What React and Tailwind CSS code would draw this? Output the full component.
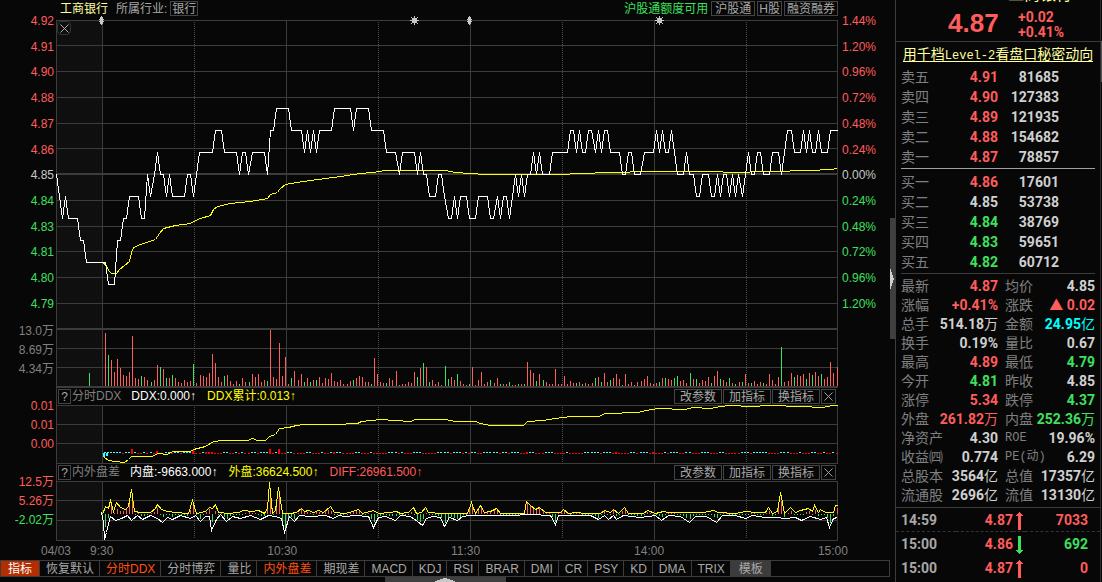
import clsx from 'clsx';
import { X } from 'lucide-react';

const LEFT = 56;
const OPEN_X = 102;
const MINUTE = 3.0625;

const priceLabels = ['4.92', '4.91', '4.90', '4.88', '4.87', '4.86', '4.85', '4.84', '4.83', '4.81', '4.80', '4.79'];
const percentLabels = ['1.44%', '1.20%', '0.96%', '0.72%', '0.48%', '0.24%', '0.00%', '0.24%', '0.48%', '0.72%', '0.96%', '1.20%'];

const pricePoints =
  '56,174 59,196 62,218 65,196 68,218 77,218 80,240 83,240 86,262 105,262 108,284 114,284 117,240 120,240 ' +
  '123,218 126,218 129,196 138,196 141,218 144,218 147,174 150,196 154,174 157,152 160,174 163,174 166,196 169,174 172,196 ' +
  '184,196 187,174 190,174 193,196 196,174 199,152 212,152 215,130 221,130 224,152 236,152 239,174 242,152 245,152 ' +
  '248,174 252,152 264,152 267,174 270,130 273,130 276,108 288,108 291,130 301,130 304,152 307,130 310,152 313,130 ' +
  '316,152 319,130 331,130 334,108 350,108 353,130 356,108 368,108 371,130 383,130 386,152 395,152 399,174 402,152 ' +
  '414,152 417,174 420,152 423,174 426,174 429,196 435,196 438,174 441,174 444,196 448,218 451,218 454,196 457,218 ' +
  '460,196 466,196 469,218 475,218 478,196 487,196 490,218 493,218 497,196 500,218 503,196 506,196 509,218 512,196 ' +
  '515,174 518,196 521,174 524,196 527,174 530,174 533,152 536,174 539,152 542,174 549,174 552,152 567,152 570,130 ' +
  '573,130 576,152 579,130 582,152 585,152 588,130 591,130 595,152 598,130 601,152 604,130 607,130 610,152 619,152 ' +
  '622,174 625,174 628,152 631,152 634,174 640,174 644,152 653,152 656,130 659,152 662,130 665,152 668,152 671,130 ' +
  '674,152 677,174 683,174 686,152 689,174 693,174 696,196 699,196 702,174 708,174 711,196 714,196 717,174 720,196 ' +
  '723,174 726,174 729,196 732,174 735,196 738,174 742,196 745,174 748,152 751,174 754,174 757,152 760,152 763,174 ' +
  '769,174 772,152 778,152 781,174 784,152 787,130 791,130 794,152 800,152 803,130 806,152 809,130 812,152 815,152 ' +
  '818,130 821,152 827,152 830,130 837,130';

const averagePoints =
  '102,262 106,265 108,270 111,273 116,273 119,269 124,265 129,261 131,252 133,247 140,244 155,239 159,233 163,228 ' +
  '175,225 190,223 193,221 200,218 210,215 213,209 217,206 230,203 250,201 267,198 270,194 277,192 279,189 285,184 ' +
  '296,182 310,180 340,176 360,173 372,172 385,170 445,170 455,172 470,173 485,174 560,174 580,173 610,172 650,171 ' +
  '715,171 730,172 770,171 810,170 830,169 837,168';

// one bar per minute, negative values are sell volume
const volume = [
  53, -31, 26, 14, 27, 18, 11, 10, 14, 50, 8, 7, -10, 9, 6, -4, 6, 21, -19, 17,
  -8, 8, -11, 8, 4, 3, 6, 4, 5, -22, 3, 11, 10, 9, 13, 32, 23, 9, 4, -10,
  11, 5, 2, 5, -2, 8, 4, -4, 12, 9, 12, 4, 6, -5, 56, 9, 7, 43, 10, 29,
  2, -8, 15, 6, 12, -4, 8, -4, 6, -6, 9, 3, 8, 7, 13, 5, 4, 6, 2, 2,
  5, -6, 8, 10, 9, 4, 4, -2, 28, 12, 4, 3, -3, 8, 6, 15, -1, 2, 2, 4,
  3, 14, -9, 18, -23, 19, -4, 6, 2, 4, 1, -20, -7, 9, 6, -12, 5, 2, 1, -2,
  19, 1, 6, 14, 2, 4, -6, 3, 8, -2, 2, 2, -4, 1, 1, -2, 2, -2, 24, 16,
  13, -5, 12, -6, 4, 2, 2, 17, 2, 2, 10, 2, 5, 3, -3, 4, -2, 3, 2, 3,
  -8, 9, -4, 13, 4, -6, 8, 12, 7, -1, 12, 2, 4, -1, 4, 5, 7, 10, 3, 2,
  3, -4, 8, -8, 7, 6, -8, -10, 5, 6, 3, -13, 7, -7, 3, 6, 5, 9, -3, 10,
  15, -7, 6, 4, -8, 3, -2, 4, -4, 12, 3, -3, 5, 2, 4, -3, 2, 12, 6, 2,
  9, -39, 4, 5, 13, -9, 11, 10, 12, -7, 13, -11, 14, 10, -12, 7, 9, 24, 13, 19,
];

const ddxTotalPoints =
  '104,457 108,460 115,461 124,462 128,459 131,456 151,456 158,453 166,454 173,451 190,451 193,449 205,446 213,441 ' +
  '222,440 247,440 252,438 257,440 265,440 269,436 275,434 279,428 288,427 296,425 303,424 335,424 357,423 361,421 ' +
  '380,419 395,420 410,421 415,419 445,419 455,421 475,421 480,423 490,425 523,425 527,421 543,420 555,418 570,416 ' +
  '598,416 605,413 638,412 645,410 658,408 685,409 692,407 710,408 720,406 730,405 750,406 770,405 800,406 822,407 ' +
  '832,405 837,405';

// r = inflow, c = outflow
const ddxFlow =
  'ccccccrccrcrrcrcrrrrccrccrcccrrrcrrrrrrccrrcrcrrccrcccrrccrrcc' +
  'rrrrccrrrcrrcrccrrrrccrrrcrrrrrcccrcrrrcccrrrrrccccrcccrcrccrrcccccrccrcccrr' +
  'rccrrrcccrrrrcrrrrrcccccrcccrrrrrrccrcccrrrrrcrcccrrccrrrcccrrrccrrrr' +
  'rcccrcccccrrrrcccrrrcrrrccrrcrrcr';
const ddxSpikes = { 10: 4, 18: 2, 30: 3, 34: 1, 35: 1, 36: 1, 55: 4, 58: 4, 76: 1, 139: 1, 168: 1, 180: 1 };

const buySide = [
  [102, 514], [105, 506], [108, 508], [110, 500], [113, 511], [116, 502], [120, 507], [125, 509], [128, 506], [131, 489],
  [134, 511], [140, 512], [150, 512], [155, 508], [157, 504], [161, 509], [167, 511], [175, 512], [188, 513], [192, 500],
  [196, 513], [205, 511], [209, 507], [212, 508], [215, 504], [218, 512], [228, 513], [238, 512], [243, 510], [252, 511],
  [258, 510], [264, 513], [267, 508], [269, 482], [272, 513], [275, 510], [278, 487], [282, 513], [290, 513], [296, 512],
  [301, 508], [304, 511], [308, 510], [313, 512], [318, 510], [323, 512], [330, 506], [334, 512], [345, 513], [352, 511],
  [358, 509], [362, 513], [373, 510], [378, 513], [390, 512], [396, 511], [400, 513], [408, 512], [413, 507], [416, 513],
  [421, 512], [425, 507], [428, 512], [440, 513], [467, 513], [471, 502], [475, 513], [480, 505], [484, 512], [490, 511],
  [496, 508], [500, 513], [524, 513], [526, 501], [530, 505], [535, 509], [539, 507], [545, 512], [560, 512], [563, 509],
  [568, 513], [575, 512], [585, 513], [600, 513], [604, 510], [610, 512], [613, 509], [618, 513], [624, 507], [628, 513],
  [643, 513], [647, 510], [655, 513], [663, 511], [668, 512], [703, 512], [713, 510], [718, 512], [735, 513], [745, 511],
  [755, 512], [765, 512], [768, 507], [772, 513], [777, 511], [780, 492], [784, 513], [790, 507], [795, 512], [800, 510],
  [808, 508], [812, 511], [814, 505], [818, 512], [820, 509], [825, 512], [833, 512], [835, 505], [837, 505],
];
const sellSide = [
  [101, 512], [103, 522], [104, 539], [106, 532], [110, 516], [115, 520], [121, 518], [127, 515], [131, 520], [137, 515],
  [142, 519], [150, 515], [157, 518], [162, 522], [167, 517], [172, 519], [180, 515], [190, 518], [195, 515], [200, 521],
  [205, 516], [209, 516], [211, 530], [216, 519], [220, 514], [226, 521], [232, 516], [240, 518], [250, 515], [260, 519],
  [268, 515], [275, 516], [281, 518], [284, 532], [289, 516], [294, 521], [299, 515], [310, 516], [325, 515], [333, 518],
  [338, 515], [345, 516], [355, 515], [368, 516], [373, 527], [378, 517], [385, 516], [395, 520], [400, 515], [410, 516],
  [417, 521], [422, 525], [426, 518], [432, 516], [440, 517], [444, 526], [449, 517], [457, 520], [462, 516], [470, 515],
  [510, 515], [530, 514], [550, 515], [555, 524], [558, 515], [590, 515], [598, 519], [604, 515], [608, 519], [613, 515],
  [616, 519], [623, 515], [640, 517], [655, 515], [661, 520], [668, 515], [680, 516], [689, 522], [695, 516], [706, 516],
  [716, 522], [722, 515], [735, 515], [745, 518], [752, 515], [765, 517], [775, 517], [785, 518], [795, 517], [801, 520],
  [810, 516], [820, 519], [826, 517], [829, 527], [833, 518], [837, 517],
];

const tabs = [
  { name: '恢复默认' },
  { name: '分时DDX', active: true },
  { name: '分时博弈' },
  { name: '量比' },
  { name: '内外盘差', active: true },
  { name: '期现差' },
  { name: 'MACD' },
  { name: 'KDJ' },
  { name: 'RSI' },
  { name: 'BRAR' },
  { name: 'DMI' },
  { name: 'CR' },
  { name: 'PSY' },
  { name: 'KD' },
  { name: 'DMA' },
  { name: 'TRIX' },
];

const RED = 'text-[#ff5c5c]';
const GREEN = 'text-[#3ee05f]';
const WHITE = 'text-[#d0d0d0]';

const asks = [
  ['卖五', '4.91', '81685', RED],
  ['卖四', '4.90', '127383', RED],
  ['卖三', '4.89', '121935', RED],
  ['卖二', '4.88', '154682', RED],
  ['卖一', '4.87', '78857', RED],
];
const bids = [
  ['买一', '4.86', '17601', RED],
  ['买二', '4.85', '53738', WHITE],
  ['买三', '4.84', '38769', GREEN],
  ['买四', '4.83', '59651', GREEN],
  ['买五', '4.82', '60712', GREEN],
];

// label, value, colour, unit
const stats = [
  ['最新', '4.87', RED],
  ['均价', '4.85', WHITE],
  ['涨幅', '+0.41%', RED],
  ['涨跌', '▲ 0.02', RED],
  ['总手', '514.18', WHITE, '万'],
  ['金额', '24.95', 'text-[#00ffff]', '亿'],
  ['换手', '0.19%', WHITE],
  ['量比', '0.67', WHITE],
  ['最高', '4.89', RED],
  ['最低', '4.79', GREEN],
  ['今开', '4.81', GREEN],
  ['昨收', '4.85', WHITE],
  ['涨停', '5.34', RED],
  ['跌停', '4.37', GREEN],
  ['外盘', '261.82', RED, '万'],
  ['内盘', '252.36', GREEN, '万'],
  ['净资产', '4.30', WHITE],
  ['ROE', '19.96%', WHITE],
  ['收益㈣', '0.774', WHITE],
  ['PE(动)', '6.29', WHITE],
  ['总股本', '3564', WHITE, '亿'],
  ['总值', '17357', WHITE, '亿'],
  ['流通股', '2696', WHITE, '亿'],
  ['流值', '13130', WHITE, '亿'],
];

const ticks = [
  { time: '14:59', price: '4.87', up: true, count: '7033' },
  { time: '15:00', price: '4.86', up: false, count: '692' },
  { time: '15:00', price: '4.87', up: true, count: '0' },
];

const minuteX = (i) => Math.floor(OPEN_X + i * MINUTE);
const toPoints = (list) => list.map((p) => p.join(',')).join(' ');

const valueAt = (list, x) => {
  const i = list.findIndex((p) => p[0] >= x);
  if (i <= 0) return list[i === 0 ? 0 : list.length - 1][1];
  const [x0, y0] = list[i - 1];
  const [x1, y1] = list[i];
  return y0 + ((y1 - y0) * (x - x0)) / (x1 - x0);
};

const Plot = ({ top, height, rows, thick = [], className, label, children }) => (
  <svg
    viewBox={`${LEFT} ${top} 782 ${height}`}
    preserveAspectRatio="none"
    shapeRendering="crispEdges"
    role="img"
    aria-label={label}
    className={clsx('block w-full overflow-visible', className)}
  >
    <rect x={LEFT} y={top} width="46" height={height} fill="#0f0f0f" />
    <g fill="#3c3c3c">
      {rows.map((y) => (
        <rect key={y} x={LEFT} y={y} width="782" height="1" />
      ))}
      {thick.map((y) => (
        <rect key={y} x={LEFT} y={y} width="782" height="2" />
      ))}
      {[56, 102, 286, 470, 654, 837].map((x) => (
        <rect key={x} x={x} y={top} width="1" height={height} />
      ))}
    </g>
    <g stroke="#4a4a4a" strokeDasharray="1 1">
      {[194, 378, 562, 746].map((x) => (
        <line key={x} x1={x + 0.5} x2={x + 0.5} y1={top + 2} y2={top + height - 2} />
      ))}
    </g>
    {children}
  </svg>
);

const Line = ({ points, color }) => (
  <polyline points={points} transform="translate(0.5 0.5)" fill="none" stroke={color} strokeWidth="1" />
);

const Sun = ({ x }) => (
  <g fill="#c8c8c8" stroke="#c8c8c8">
    <rect x={x - 2} y="18" width="5" height="5" stroke="none" />
    <path d={`M${x + 0.5} 16v9M${x - 4} 20.5h9M${x - 3} 17l7 7M${x + 4} 17l-7 7`} />
  </g>
);

const Diamond = ({ x }) => (
  <path d={`M${x + 1} 16h1v1h1v2h1v1h-1v1h1v1h-1v2h-1v1h-1v-1h-1v-2h-1v-1h1v-1h-1v-1h1v-2h1z`} fill="#c8c8c8" />
);

const SideLabels = ({ items }) => (
  <div className="-mt-2 pr-[2px] text-right leading-[19px]">
    {items.map(([text, color], i) => (
      <div key={i} className={color}>{text}</div>
    ))}
  </div>
);

const boxClass = 'border border-[#444] text-[#a8a8a8] hover:text-white';

const IndicatorHeader = ({ name, values }) => (
  <div className="col-start-2 flex h-[17px] items-center border-l border-[#3c3c3c] pl-px pr-[2px] leading-[19px] whitespace-nowrap">
    <button type="button" className={clsx(boxClass, 'h-[15px] w-[13px] leading-[15px]')}>?</button>
    <span className="ml-px text-[#808080]">{name}</span>
    <div className="ml-2.5 flex gap-[11px]">
      {values.map(([text, color]) => (
        <span key={text} className={color}>{text}</span>
      ))}
    </div>
    <div className="ml-auto flex gap-px">
      {['改参数', '加指标', '换指标'].map((text) => (
        <button key={text} type="button" className={clsx(boxClass, 'h-[15px] w-12 leading-[15px]')}>{text}</button>
      ))}
      <button type="button" aria-label="关闭" className={clsx(boxClass, 'flex h-[15px] w-[15px] items-center justify-center')}>
        <X size={15} strokeWidth={1.5} className="shrink-0" />
      </button>
    </div>
  </div>
);

const OrderTable = ({ rows }) => (
  <table className="w-full table-fixed">
    <tbody>
      {rows.map(([label, price, count, color]) => (
        <tr key={label} className="h-5 leading-5">
          <th scope="row" className="w-[42px] p-0 text-left font-normal text-[#808080]">{label}</th>
          <td className={clsx('w-[55px] p-0 text-right font-bold', color)}>{price}</td>
          <td className="p-0 pr-9 text-right font-bold text-[#d0d0d0]">{count}</td>
        </tr>
      ))}
    </tbody>
  </table>
);

const TickArrow = ({ up }) => (
  <svg width="7" height="18" viewBox="0 0 7 18" className={up ? 'text-[#ff5c5c]' : 'text-[#3ee05f]'} shapeRendering="crispEdges">
    <path
      d="M3 0h1v1h1v1h1v1h1v1H5v14H2V4H0V3h1V2h1V1h1z"
      fill="currentColor"
      transform={up ? undefined : 'rotate(180 3.5 9)'}
    />
  </svg>
);

const ChartArea = () => (
  <main className="relative min-w-0 flex-1">
    <header className="flex h-5 items-start pt-px pr-[57px] pl-[60px] leading-4 whitespace-nowrap">
      <h1 className="leading-[17px] text-[#ffffa0]">工商银行</h1>
      <span className="ml-2 leading-[17px] text-[#a8a8a8]">所属行业:</span>
      <a href="#industry" className="ml-[3px] h-[15px] border border-[#444] px-px leading-[15px] text-[#a8a8a8]">银行</a>
      <div className="ml-auto flex gap-0.5">
        <span className="mr-px leading-[17px] text-[#3ee05f]">沪股通额度可用</span>
        <a href="#hgt" className="h-[15px] border border-[#444] px-[3px] leading-[15px] text-[#a8a8a8]">沪股通</a>
        <a href="#hshare" className="h-[15px] border border-[#444] px-px leading-[15px] text-[#a8a8a8]">H股</a>
        <a href="#margin" className="h-[15px] border border-[#444] px-0.5 leading-[15px] text-[#a8a8a8]">融资融券</a>
      </div>
    </header>

    <div className="grid grid-cols-[56px_minmax(0,1fr)_57px]">
      {/* price */}
      <div className="-mt-[7px] flex h-[299px] flex-col justify-between pr-[2px] text-right leading-4">
        {priceLabels.map((text, i) => (
          <span key={text} className={i < 6 ? 'text-[#ff5c5c]' : i === 6 ? 'text-[#c8c8c8]' : 'text-[#3ee05f]'}>{text}</span>
        ))}
      </div>
      <div className="relative">
        <Plot
          top={20}
          height={310}
          rows={[20, 45, 71, 97, 123, 148, 200, 226, 251, 277, 303]}
          thick={[173, 328]}
          className="h-[310px]"
          label="分时走势"
        >
          <Line points={averagePoints} color="#ffff00" />
          <Line points={pricePoints} color="#ffffff" />
          <Diamond x={100} />
          <Sun x={414} />
          <Diamond x={468} />
          <Sun x={659} />
        </Plot>
        <button
          type="button"
          aria-label="关闭"
          className="absolute top-px left-px flex h-3.5 w-3.5 items-center justify-center rounded border border-[#333] text-[#b8b8b8]"
        >
          <X size={15} strokeWidth={1.5} className="shrink-0" />
        </button>
      </div>
      <div className="-mt-[7px] flex h-[299px] flex-col justify-between pl-1 leading-4">
        {percentLabels.map((text, i) => (
          <span key={i} className={i < 6 ? 'text-[#ff5c5c]' : i === 6 ? 'text-[#c8c8c8]' : 'text-[#3ee05f]'}>{text}</span>
        ))}
      </div>

      {/* volume */}
      <SideLabels items={[['13.0万', 'text-[#808080]'], ['8.69万', 'text-[#808080]'], ['4.34万', 'text-[#808080]']]} />
      <Plot top={330} height={58} rows={[348, 367]} thick={[386]} className="h-[58px]" label="成交量">
        <rect x="89" y="373" width="1" height="13" fill="#3ee05f" />
        {volume.map((v, i) => (
          <rect
            key={i}
            x={minuteX(i + 1)}
            y={386 - Math.abs(v)}
            width="1"
            height={Math.abs(v)}
            fill={v > 0 ? '#ff5c5c' : '#3ee05f'}
          />
        ))}
      </Plot>

      <IndicatorHeader
        name="分时DDX"
        values={[['DDX:0.000↑', 'text-white'], ['DDX累计:0.013↑', 'text-[#ffff00]']]}
      />

      <div className="col-start-1">
        <SideLabels items={[['0.01', 'text-[#ff5c5c]'], ['0.01', 'text-[#ff5c5c]'], ['0.00', 'text-[#ff5c5c]']]} />
      </div>
      <Plot top={405} height={59} rows={[405, 424, 443, 463]} className="h-[59px]" label="分时DDX">
        <rect x="103" y="453" width="2" height="4" fill="#40ffff" />
        <rect x="106" y="453" width="2" height="3" fill="#40ffff" />
        {ddxFlow.split('').map((flow, i) => {
          const spike = ddxSpikes[i + 1] || 0;
          const up = flow === 'r' || spike > 0;
          return (
            <rect
              key={i}
              x={minuteX(i + 1) - 1}
              y={up ? 453 - spike : 452}
              width="2"
              height={1 + spike}
              fill={up ? '#ff0000' : '#40ffff'}
            />
          );
        })}
        <Line points={ddxTotalPoints} color="#ffff00" />
      </Plot>

      <IndicatorHeader
        name="内外盘差"
        values={[
          ['内盘:-9663.000↑', 'text-white'],
          ['外盘:36624.500↑', 'text-[#ffff00]'],
          ['DIFF:26961.500↑', 'text-[#ff5c5c]'],
        ]}
      />

      <div className="col-start-1">
        <SideLabels items={[['12.5万', 'text-[#ff5c5c]'], ['5.26万', 'text-[#ff5c5c]'], ['-2.02万', 'text-[#3ee05f]']]} />
      </div>
      <Plot top={481} height={60} rows={[481, 500, 520, 540]} className="h-[60px]" label="内外盘差">
        {volume.map((_, i) => {
          const x = minuteX(i + 1);
          const diff = Math.round(1028 - valueAt(buySide, x) - valueAt(sellSide, x));
          return (
            <rect
              key={i}
              x={x}
              y={diff > 0 ? 514 - diff : 514}
              width="1"
              height={Math.max(1, Math.abs(diff))}
              fill={diff > 0 ? '#ff5c5c' : '#3ee05f'}
            />
          );
        })}
        <Line points={toPoints(buySide)} color="#ffff00" />
        <Line points={toPoints(sellSide)} color="#ffffff" />
      </Plot>
    </div>

    <div className="flex h-[19px] pr-[47px] pl-[41px] leading-[21px] text-[#808080]">
      <span className="w-[49px]">04/03</span>
      <div className="flex flex-1 justify-between">
        {['9:30', '10:30', '11:30', '14:00', '15:00'].map((text) => (
          <span key={text}>{text}</span>
        ))}
      </div>
    </div>

    <nav className="mr-[5px] flex h-[17px] border border-[#3c3c3c] leading-[17px] whitespace-nowrap">
      <button type="button" className="w-[39px] border-r border-[#3c3c3c] bg-[#b32d00] text-white">指标</button>
      {tabs.map(({ name, active }) => (
        <button
          key={name}
          type="button"
          className={clsx('border-r border-[#3c3c3c] pr-[5px] pl-1.5', active ? 'text-[#ff5010]' : 'text-[#a8a8a8]')}
        >
          {name}
        </button>
      ))}
      <button type="button" className="w-10 bg-[#3c3c3c] text-[#a8a8a8]">模板</button>
    </nav>
    <div className="mr-[5px] flex h-[5px] justify-center">
      <button type="button" aria-label="展开" className="flex w-[121px] justify-center bg-[#3f3f3f]">
        <svg width="20" height="5" viewBox="0 0 20 5" shapeRendering="crispEdges">
          <path d="M0 5V4h2V3h3V2h3V1h4v1h3v1h3v1h2v1z" fill="#c8c8c8" />
        </svg>
      </button>
    </div>

    {/* collapse handle over the edge of the chart */}
    <button type="button" aria-label="收起" className="absolute top-[218px] right-0 flex h-[121px] w-[5px] items-center bg-[#3f3f3f]">
      <svg width="4" height="20" viewBox="0 0 4 20" shapeRendering="crispEdges">
        <path d="M0 0h1v3h1v3h1v3h1v2H3v3H2v3H1v3H0z" fill="#d0d0d0" />
      </svg>
    </button>
  </main>
);

const QuotePanel = () => (
  <aside className="flex w-[207px] shrink-0 border-l border-[#3c3c3c] text-[14px]">
    <div className="min-w-0 flex-1 border-r border-[#2c2c2c] font-[Roboto,'Noto_Sans_CJK_SC',sans-serif]">
      <div className="h-[42px] border-b border-[#3c3c3c]">
        <div className="flex h-[3px] items-end justify-end overflow-hidden pr-7 text-[16px] leading-4 text-[#ffffa0]">
          工商银行
        </div>
        <div className="flex h-[38px] items-start pt-1.5 pl-[52px] text-[#ff5c5c]">
          <strong className="w-[70px] font-['Liberation_Sans',sans-serif] text-[26px] leading-7">4.87</strong>
          <div className="pt-px font-bold leading-[15px]">
            <div>+0.02</div>
            <div>+0.41%</div>
          </div>
        </div>
      </div>

      <a href="#level2" className="flex h-6 items-center justify-center whitespace-nowrap text-[#ffffa0]">
        <span className="h-[15px] border-b border-[#ffffa0] leading-[15px]">
          用千档<span className="font-['Liberation_Mono',monospace] text-[12px]">Level-2</span>看盘口秘密动向
        </span>
      </a>

      <div className="mr-[5px] ml-[5px]">
        <div className="border-b border-[#a0a0a0] pt-px pb-px">
          <OrderTable rows={asks} />
        </div>
        <div className="border-b border-[#3c3c3c] pt-[3px] pb-px">
          <OrderTable rows={bids} />
        </div>
        <dl className="grid grid-cols-[97px_minmax(0,1fr)] gap-x-[7px] pt-[3px] pb-0.5 whitespace-nowrap">
          {stats.map(([label, value, color, unit]) => (
            <div key={label} className="flex h-[19px] justify-between leading-[19px]">
              <dt
                className={clsx(
                  'text-[#808080]',
                  /[A-Z]/.test(label) && "font-['Liberation_Mono','Noto_Sans_CJK_SC',monospace] text-[12px]"
                )}
              >
                {label}
              </dt>
              <dd className={clsx('font-bold', color)}>
                {value}
                {unit && <span className="font-normal">{unit}</span>}
              </dd>
            </div>
          ))}
        </dl>
      </div>

      <table className="w-full table-fixed border-t border-[#3c3c3c] font-bold">
        <tbody>
          {ticks.map(({ time, price, up, count }, i) => (
            <tr key={i} className={clsx('h-6', i === 0 && 'border-b border-dashed border-[#333]')}>
              <td className="w-[60px] p-0 pt-0.5 pl-[5px] text-[#a8a8a8]">{time}</td>
              <td className="w-[57px] p-0 pt-0.5 text-right text-[#ff5c5c]">{price}</td>
              <td className="w-3 p-0 pt-0.5 pl-[3px]"><TickArrow up={up} /></td>
              <td className={clsx('p-0 pt-0.5 pr-3 text-right', up ? 'text-[#ff5c5c]' : 'text-[#3ee05f]')}>{count}</td>
            </tr>
          ))}
        </tbody>
      </table>
    </div>
    <div className="w-px pt-[41px]">
      <div className="h-[41px] bg-[#555]" />
    </div>
  </aside>
);

const App = () => {
  return (
    <div className="flex min-h-screen bg-[#070707] font-['Liberation_Sans','Noto_Sans_CJK_SC',sans-serif] text-[12px]">
      <ChartArea />
      <QuotePanel />
    </div>
  );
};

export default App;
